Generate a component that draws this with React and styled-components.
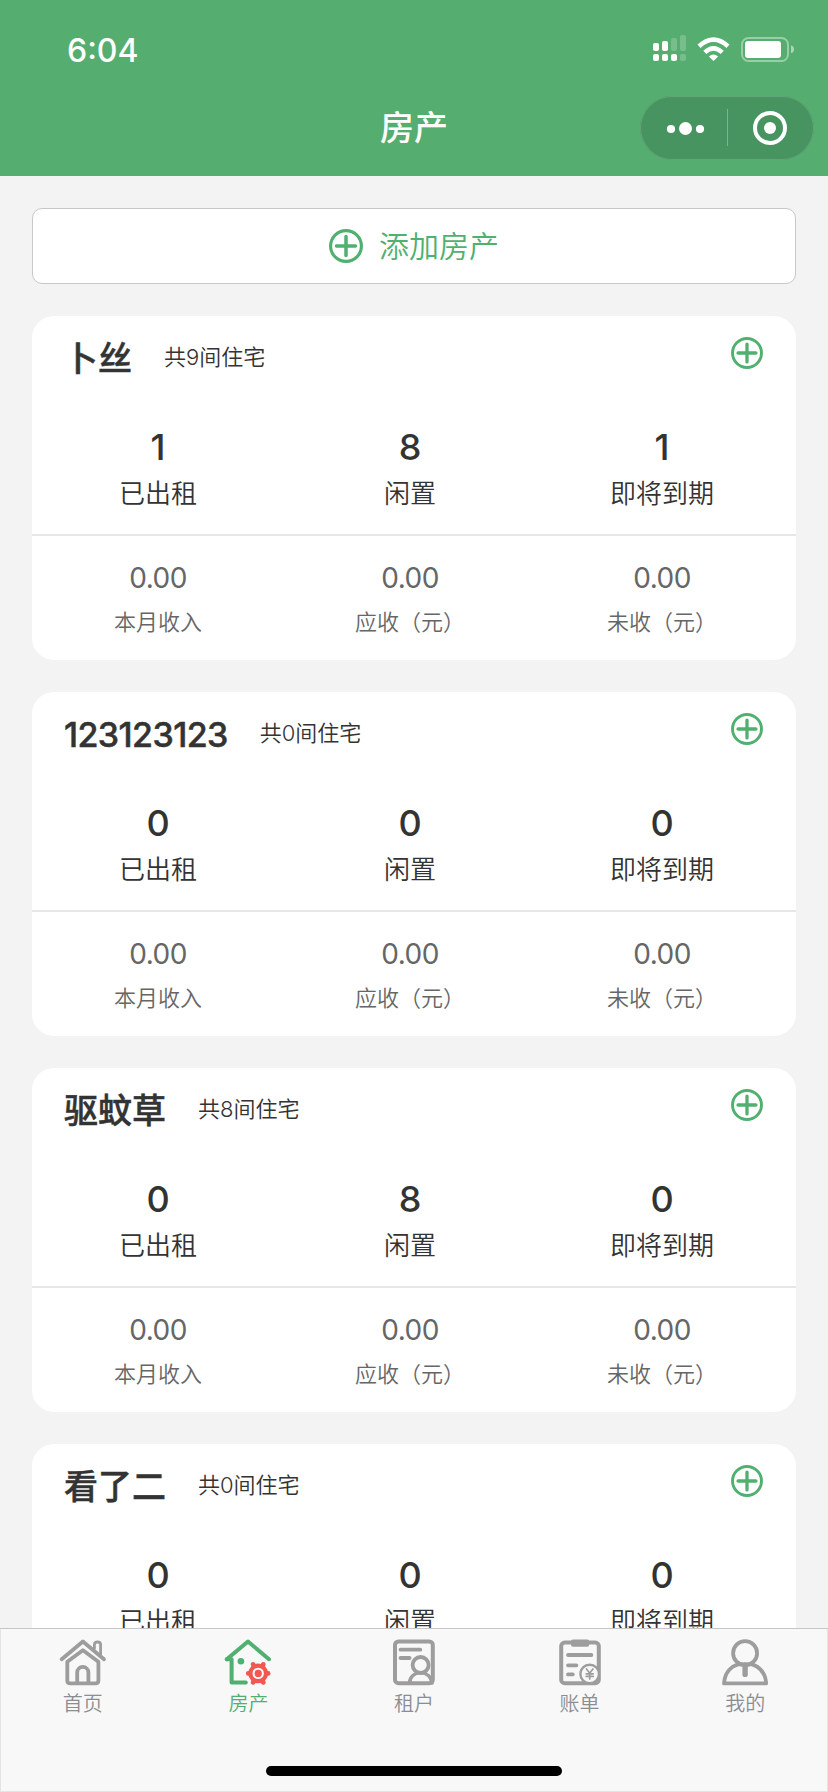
import React from 'react';
import styled, { createGlobalStyle } from "styled-components";

const GREEN = "#4fb06f";
const GRAY = "#9d9d9d";

// data
const houses = [
    { name: "卜丝", total: 9, rented: 1, idle: 8, expiring: 1 },
    { name: "123123123", total: 0, rented: 0, idle: 0, expiring: 0 },
    { name: "驱蚊草", total: 8, rented: 0, idle: 8, expiring: 0 },
    { name: "看了二", total: 0, rented: 0, idle: 0, expiring: 0 },
];

// icons
const PlusCircle = ({ size }) => (
    <svg width={size} height={size} viewBox="0 0 34 34" fill="none" stroke={GREEN} strokeLinecap="round">
        <circle cx="17" cy="17" r="15.4" strokeWidth="3.1" />
        <path d="M7.5 17H26.5M17 7.5V26.5" strokeWidth="3.5" />
    </svg>
);

const StatusIcons = () => (
    <svg width="144" height="30" viewBox="652 34 144 30" fill="#fff">
        <rect x="653" y="54" width="6" height="7" rx="2" />
        <rect x="662" y="54" width="6" height="7" rx="2" />
        <rect x="671" y="54" width="6" height="7" rx="2" />
        <rect x="680" y="54" width="6" height="7" rx="2" opacity="0.2" />
        <rect x="653" y="43" width="6" height="8" rx="2" />
        <rect x="662" y="41" width="6" height="10" rx="2" />
        <rect x="671" y="38" width="6" height="13" rx="2" opacity="0.2" />
        <rect x="680" y="35" width="6" height="16" rx="2" opacity="0.2" />
        <path d="M713.5 61L708.9 56.4Q713.5 52.8 718.1 56.4Z" />
        <g fill="none" stroke="#fff" strokeWidth="4.6">
            <path d="M704.8 52.4Q713.5 44.4 722.2 52.4" />
            <path d="M699 46.2Q713.5 33 728 46.2" />
        </g>
        <rect x="742" y="38" width="46" height="23" rx="6.5" fill="none" stroke="#fff" strokeWidth="2" opacity="0.4" />
        <rect x="745" y="41" width="36" height="17" rx="3" />
        <path d="M791 45.3Q794 46.3 794 49.3Q794 52.3 791 53.3Z" opacity="0.5" />
    </svg>
);

const HomeIcon = () => (
    <svg width="48" height="48" viewBox="0 0 48 48" fill="none" stroke={GRAY} strokeWidth="3.8" strokeLinecap="round" strokeLinejoin="round">
        <path d="M2.7 20.2L23.9 2.5L45 20.2" />
        <path d="M8.3 22.8L23.9 11.2L39.4 22.8V41.5Q39.4 44.4 36.5 44.4H11.2Q8.3 44.4 8.3 41.5Z" />
        <path d="M18.2 44V33.5A5.6 5.6 0 0 1 29.4 33.5V44" />
        <path d="M35.4 9.5V5.5Q35.4 3 38.5 3Q41.6 3 41.6 5.5V17" strokeWidth="2.8" />
    </svg>
);

const HouseIcon = () => (
    <svg width="48" height="48" viewBox="0 0 48 48" fill="none" stroke={GREEN} strokeWidth="4" strokeLinecap="round" strokeLinejoin="round">
        <path d="M2.8 20.2L24 2.5L45 20.2" />
        <path d="M2.8 20.2H7.6V43.4H21.8" />
        <circle cx="16.9" cy="22.2" r="3.3" fill={GREEN} stroke="none" />
        <g stroke="#f25852">
            <circle cx="34.2" cy="34.4" r="7.8" strokeWidth="4.2" />
            <path d="M43.2 34.4H44.2M25.2 34.4H24.2M38.7 26.6L39.3 25.4M29.7 26.6L29.1 25.4M38.7 42.2L39.3 43.4M29.7 42.2L29.1 43.4" strokeWidth="4.6" />
            <circle cx="34.2" cy="34.4" r="3.6" fill="#f25852" stroke="none" />
        </g>
    </svg>
);

const TenantIcon = () => (
    <svg width="48" height="48" viewBox="0 0 48 48" fill="none" stroke={GRAY} strokeWidth="4" strokeLinecap="round">
        <rect x="5" y="2.4" width="37.8" height="41.8" rx="3.5" />
        <path d="M10.5 10.7H30.3M10.5 19H19.6" strokeWidth="3.8" />
        <circle cx="30.6" cy="26" r="8" strokeWidth="3.8" />
        <path d="M19.4 44C20.2 37 25 33.8 30.6 33.8S41 37 42 44" strokeWidth="3.6" />
    </svg>
);

const BillIcon = () => (
    <svg width="48" height="48" viewBox="0 0 48 48" fill="none" stroke={GRAY} strokeWidth="4" strokeLinecap="round">
        <rect x="5.2" y="3.6" width="37.6" height="40.6" rx="3.5" />
        <rect x="15" y="0.4" width="18.2" height="7.4" rx="2" fill={GRAY} stroke="none" />
        <path d="M12 16H35.4M12 26.3H20.4M12 35.4H16.8" strokeWidth="3.8" />
        <circle cx="33.7" cy="35" r="9.3" fill="#f8f8f8" strokeWidth="2.4" />
        <path d="M30.5 30L33.7 34.2L36.9 30M33.7 34.2V40M30.2 34.8H37.2M30.2 37.4H37.2" strokeWidth="1.7" />
    </svg>
);

const MineIcon = () => (
    <svg width="48" height="48" viewBox="0 0 48 48" fill="none" stroke={GRAY} strokeWidth="3.8" strokeLinejoin="round">
        <circle cx="24.1" cy="14.2" r="12" />
        <path d="M3 44.4C3.8 34.5 9.2 27.6 17.2 25.3H31C39 27.6 44.4 34.5 45.2 44.4Z" />
        <path d="M24.1 26V35.4" strokeWidth="5.4" strokeLinecap="round" />
    </svg>
);

const tabs = [
    { label: "首页", Icon: HomeIcon },
    { label: "房产", Icon: HouseIcon, active: true },
    { label: "租户", Icon: TenantIcon },
    { label: "账单", Icon: BillIcon },
    { label: "我的", Icon: MineIcon },
];

const HouseCard = ({ house }) => (
    <StyledCard>
        <CardHead>
            <HouseName $latin={/^\w+$/.test(house.name)}>{house.name}</HouseName>
            <span>共{house.total}间住宅</span>
            <PlusCircle size={32} />
        </CardHead>
        <Rooms>
            <Stat><b>{house.rented}</b><span>已出租</span></Stat>
            <Stat><b>{house.idle}</b><span>闲置</span></Stat>
            <Stat><b>{house.expiring}</b><span>即将到期</span></Stat>
        </Rooms>
        <Money>
            <Amount><b>0.00</b><span>本月收入</span></Amount>
            <Amount><b>0.00</b><span>应收（元）</span></Amount>
            <Amount><b>0.00</b><span>未收（元）</span></Amount>
        </Money>
    </StyledCard>
);

const App = () => {
    return (
        <Page>
            <GlobalStyle />
            <Header>
                <StatusBar>
                    <Time>6:04</Time>
                    <StatusIcons />
                </StatusBar>
                <NavBar>
                    <div />
                    <h1>房产</h1>
                    <Capsule>
                        <svg width="174" height="64" viewBox="0 0 174 64" fill="#fff">
                            <circle cx="31" cy="33" r="4.1" />
                            <circle cx="45.5" cy="32.5" r="6.5" />
                            <circle cx="60" cy="33" r="4.1" />
                            <rect x="87" y="13" width="1" height="37" opacity="0.3" />
                            <circle cx="130" cy="32" r="15" fill="none" stroke="#fff" strokeWidth="4" />
                            <circle cx="130" cy="32" r="6" />
                        </svg>
                    </Capsule>
                </NavBar>
            </Header>
            <Content>
                <AddButton>
                    <PlusCircle size={34} />
                    <span>添加房产</span>
                </AddButton>
                {houses.map((house) => <HouseCard key={house.name} house={house} />)}
            </Content>
            <TabBar>
                <Tabs>
                    {tabs.map(({ label, Icon, active }) => (
                        <Tab key={label} $active={active}>
                            <Icon />
                            <span>{label}</span>
                        </Tab>
                    ))}
                </Tabs>
                <HomeIndicator />
            </TabBar>
        </Page>
    );
}

const GlobalStyle = createGlobalStyle`
    *{
        margin:0;
        padding:0;
        box-sizing:border-box;
    }
    body{
        font-family:Inter, "Noto Sans CJK SC", sans-serif;
        font-weight:350;
        color:#333;
        background:#f3f3f3;
    }
    svg{
        display:block;
        flex-shrink:0;
    }
`;
const Page = styled.div`
    width:828px;
    height:1792px;
    display:flex;
    flex-direction:column;
    overflow:hidden;
    background:#f3f3f3;
`;
const Header = styled.header`
    height:176px;
    flex-shrink:0;
    background:#55ae70;
    color:#fff;
`;
const StatusBar = styled.div`
    height:96px;
    padding:34px 32px 0 67px;
    display:flex;
    justify-content:space-between;
`;
const Time = styled.span`
    font-size:32px;
    font-weight:500;
    line-height:33px;
`;
const NavBar = styled.div`
    display:grid;
    grid-template-columns:1fr auto 1fr;
    padding:0 14px;
    h1{
        font-size:34px;
        font-weight:500;
        line-height:64px;
    }
`;
const Capsule = styled.div`
    width:174px;
    height:64px;
    justify-self:end;
    border-radius:32px;
    background:#479460;
    box-shadow:inset 0 0 0 1px #62a578;
`;
const Content = styled.main`
    flex:1;
    min-height:0;
    padding:32px 32px 0;
    display:flex;
    flex-direction:column;
    gap:32px;
    overflow:hidden;
`;
const AddButton = styled.button`
    height:76px;
    flex-shrink:0;
    display:flex;
    align-items:center;
    justify-content:center;
    gap:16px;
    border:1px solid #c8c8c8;
    border-radius:10px;
    background:#fff;
    color:${GREEN};
    font-family:inherit;
    font-weight:inherit;
    font-size:30px;
    line-height:40px;
`;
const StyledCard = styled.section`
    height:344px;
    flex-shrink:0;
    border-radius:22px;
    background:#fff;
`;
const CardHead = styled.div`
    height:98px;
    padding:21px 33px 0 32px;
    display:flex;
    span{
        margin-left:32px;
        font-size:22px;
        line-height:40px;
    }
    svg{
        margin-left:auto;
    }
`;
const HouseName = styled.h2`
    font-size:34px;
    font-weight:500;
    letter-spacing:${(props) => (props.$latin ? "-0.6px" : "0")};
    line-height:43px;
    -webkit-text-stroke:0.5px #333;
`;
const Row = styled.div`
    display:grid;
    grid-template-columns:repeat(3, 252px);
`;
const Rooms = styled(Row)`
    height:122px;
    padding-top:11px;
    border-bottom:2px solid #e6e6e6;
`;
const Money = styled(Row)`
    padding-top:22px;
`;
const Stat = styled.div`
    display:flex;
    flex-direction:column;
    align-items:center;
    b{
        font-size:36px;
        font-weight:500;
        line-height:44px;
    }
    span{
        font-size:26px;
        line-height:49px;
    }
`;
const Amount = styled(Stat)`
    color:#666;
    b{
        font-size:28px;
        font-weight:400;
        letter-spacing:-0.5px;
        line-height:41px;
    }
    span{
        font-size:22px;
        line-height:47px;
    }
`;
const TabBar = styled.nav`
    height:164px;
    flex-shrink:0;
    display:flex;
    flex-direction:column;
    align-items:center;
    justify-content:space-between;
    padding-bottom:16px;
    border-top:1px solid #c6c6c6;
    background:#f8f8f8;
    box-shadow:inset -1px -1px #e4e4e4, inset 1px 0 #e4e4e4;
`;
const Tabs = styled.div`
    width:100%;
    display:grid;
    grid-template-columns:repeat(5, 1fr);
    padding-top:10px;
`;
const Tab = styled.div`
    display:flex;
    flex-direction:column;
    align-items:center;
    color:${(props) => (props.$active ? GREEN : "#8a8d92")};
    span{
        font-size:20px;
        line-height:35px;
    }
`;
const HomeIndicator = styled.div`
    width:296px;
    height:10px;
    border-radius:5px;
    background:#000;
`;

export default App;
